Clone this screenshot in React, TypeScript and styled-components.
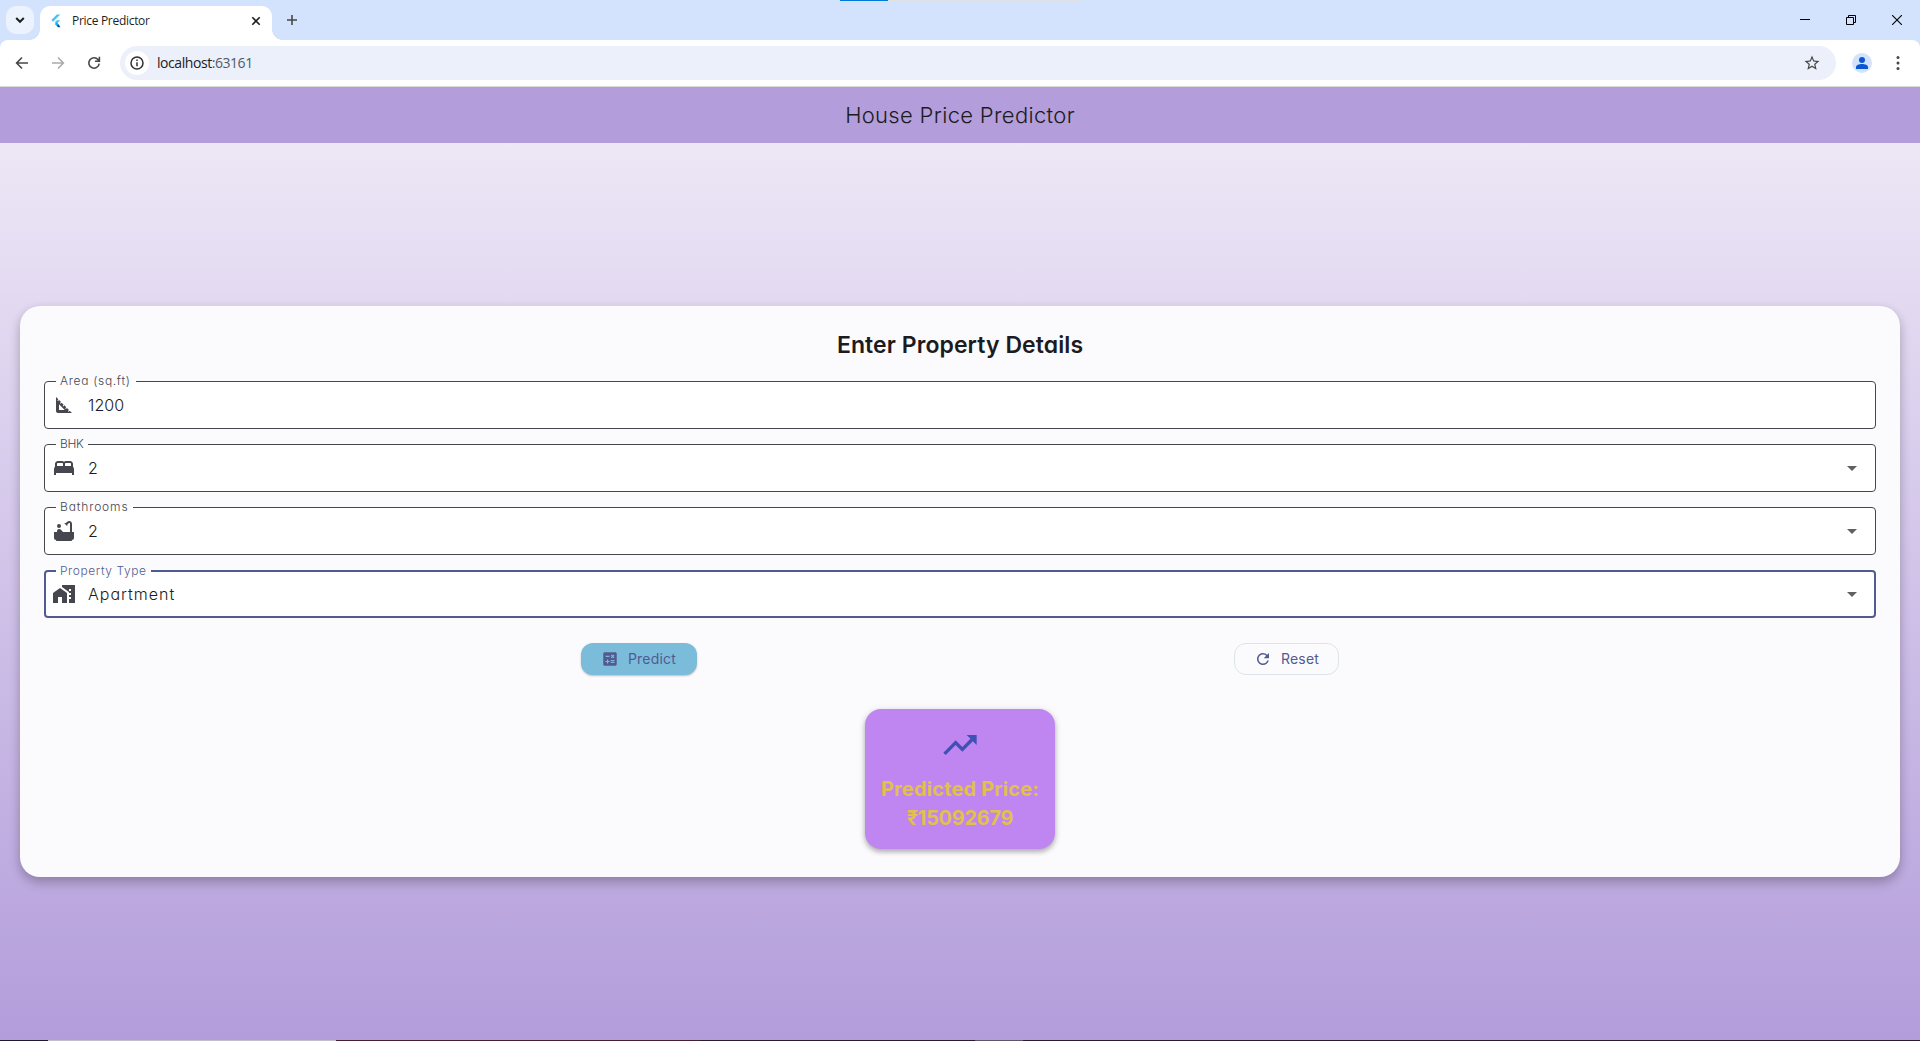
import React from 'react';
import styled, { createGlobalStyle } from 'styled-components';
import {
  MdArrowDropDown,
  MdBathtub,
  MdBed,
  MdCalculate,
  MdHomeWork,
  MdRefresh,
  MdSquareFoot,
  MdTrendingUp,
} from 'react-icons/md';

const GlobalStyle = createGlobalStyle`
  * { box-sizing: border-box; }
  body { margin: 0; overflow: hidden; }
  button { font: inherit; border: 0; padding: 0; background: none; color: inherit; }
  svg { display: block; flex: none; }
`;

const Window = styled.div`
  width: 1920px;
  height: 1041px;
  display: flex;
  flex-direction: column;
  font-family: Inter, 'Liberation Sans', sans-serif;
  font-feature-settings: 'cv11' 1;
  color: #1b1b21;
`;

/* ---------- browser chrome ---------- */

const TabStrip = styled.div`
  position: relative;
  height: 40px;
  flex: none;
  display: flex;
  align-items: flex-start;
  padding: 6px 0 0 6px;
  background: #d3e3fd;
`;

const LoadBar = styled.div`
  position: absolute;
  top: 0;
  left: 840px;
  width: 241px;
  height: 1px;
  background: linear-gradient(90deg, #0078d7 48px, #e1e2e4 48px);
`;

const TabSearch = styled.button`
  width: 28px;
  height: 28px;
  display: grid;
  place-items: center;
  border-radius: 10px;
  background: #ecf3fe;
`;

const Tab = styled.div`
  position: relative;
  width: 232px;
  height: 34px;
  margin-left: 6px;
  padding: 0 11px 5px 8px;
  display: flex;
  align-items: center;
  border-radius: 10px 10px 0 0;
  background: #fff;

  &::before,
  &::after {
    content: '';
    position: absolute;
    bottom: 0;
    width: 10px;
    height: 10px;
  }
  &::before {
    left: -10px;
    background: radial-gradient(circle at 0 0, transparent 9.5px, #fff 10px);
  }
  &::after {
    right: -10px;
    background: radial-gradient(circle at 100% 0, transparent 9.5px, #fff 10px);
  }
`;

const TabTitle = styled.span`
  flex: 1;
  margin: 1px 0 0 8px;
  font: 12px/16px 'Open Sans', 'Noto Sans', sans-serif;
  letter-spacing: -0.3px;
  color: #1f1f1f;
`;

const NewTab = styled.button`
  width: 28px;
  height: 28px;
  margin-left: 6px;
  display: grid;
  place-items: center;
`;

const WindowControls = styled.div`
  margin: -6px 0 0 auto;
  display: flex;
`;

const WindowButton = styled.button`
  width: 46px;
  height: 40px;
  display: grid;
  place-items: center;
`;

const Toolbar = styled.div`
  height: 47px;
  flex: none;
  background: #d3e3fd;
`;

const ToolbarInner = styled.div`
  height: 47px;
  padding: 6px 8px 6px 8px;
  display: flex;
  align-items: flex-start;
  border-radius: 8px 8px 0 0;
  border-bottom: 1px solid #d9dad8;
  background: #fff;
`;

const NavButton = styled.button<{ $gap?: number }>`
  width: 28px;
  height: 34px;
  margin-right: ${(p) => p.$gap ?? 8}px;
  display: grid;
  place-items: center;
`;

const Omnibox = styled.div`
  flex: 1;
  height: 34px;
  margin-right: 12px;
  padding: 0 15px 0 5px;
  display: flex;
  align-items: center;
  border-radius: 17px;
  background: #ecf0fa;
`;

const SiteInfo = styled.span`
  width: 24px;
  height: 24px;
  display: grid;
  place-items: center;
  border-radius: 50%;
  background: #fff;
`;

const Url = styled.span`
  flex: 1;
  margin-left: 8px;
  font: 14px/20px 'Open Sans', 'Noto Sans', sans-serif;
  letter-spacing: -0.44px;
  color: #202124;

  span { color: #4d5a6d; }
`;

const Profile = styled.span`
  width: 28px;
  height: 34px;
  margin-right: 8px;
  display: grid;
  place-items: center;
`;

/* ---------- application ---------- */

const AppBar = styled.header`
  height: 56px;
  flex: none;
  display: flex;
  align-items: center;
  justify-content: center;
  background: #b39ddb;
`;

const AppTitle = styled.h1`
  margin: 0;
  font-size: 22px;
  line-height: 28px;
  font-weight: 350;
  letter-spacing: 0.32px;
`;

const Body = styled.main`
  flex: 1;
  display: flex;
  flex-direction: column;
  justify-content: center;
  padding: 0 20px;
  background: linear-gradient(#ede7f6, #b39ddb);
`;

const FormCard = styled.section`
  height: 571px;
  padding: 24px;
  display: flex;
  flex-direction: column;
  border-radius: 20px;
  background: #fbfbfd;
  box-shadow: 0 6px 12px rgba(0, 0, 0, 0.2), 0 2px 10px rgba(0, 0, 0, 0.08);
`;

const CardTitle = styled.h2`
  margin: 0 0 21px;
  text-align: center;
  font-size: 23px;
  line-height: 30px;
  font-weight: 600;
  letter-spacing: 0.08px;
`;

const FieldList = styled.div`
  display: flex;
  flex-direction: column;
  gap: 15px;
`;

const Field = styled.div`
  position: relative;
  height: 48px;
  padding: 0 12px 0 8px;
  display: flex;
  align-items: center;
  color: #46464f;
`;

const Outline = styled.fieldset<{ $focused?: boolean }>`
  position: absolute;
  inset: -8px 0 0;
  margin: 0;
  padding: 0 0 0 ${(p) => (p.$focused ? 10 : 11)}px;
  min-width: 0;
  border: ${(p) => (p.$focused ? '2px solid #515b92' : '1px solid #46464f')};
  border-radius: 4px;
  background: #fff;
  color: ${(p) => (p.$focused ? '#515b92' : '#46464f')};

  legend {
    height: ${(p) => (p.$focused ? 18 : 17)}px;
    line-height: ${(p) => (p.$focused ? 18 : 16)}px;
  }
`;

const Legend = styled.legend<{ $width: number; $spacing: number }>`
  width: ${(p) => p.$width}px;
  padding: 0 0 0 4px;
  font-size: 12px;
  font-weight: 350;
  letter-spacing: ${(p) => p.$spacing}px;
  white-space: nowrap;
`;

const FieldIcon = styled.span`
  position: relative;
  width: 24px;
  height: 24px;
`;

const Value = styled.span<{ $spacing: number }>`
  position: relative;
  flex: 1;
  margin: 0 0 0 12px;
  font-size: 16px;
  line-height: 24px;
  font-weight: 350;
  letter-spacing: ${(p) => p.$spacing}px;
  color: #1b1b21;
`;

const Arrow = styled(MdArrowDropDown)`
  position: relative;
  color: #616161;
`;

const Actions = styled.div`
  margin-top: 25px;
  display: flex;
  justify-content: space-evenly;
`;

const ActionButton = styled.button<{ $filled?: boolean; $width: number }>`
  && {
    width: ${(p) => p.$width}px;
    height: 32px;
    padding-left: ${(p) => (p.$filled ? 20 : 19)}px;
    display: flex;
    align-items: center;
    gap: 9px;
    border-radius: 12px;
    border: ${(p) => (p.$filled ? '0' : '1px solid #dde4e9')};
    background: ${(p) => (p.$filled ? '#7cbcdb' : 'transparent')};
    box-shadow: ${(p) => (p.$filled ? '0 1px 2px rgba(0, 0, 0, 0.25)' : 'none')};
    font-size: 14px;
    line-height: 20px;
    letter-spacing: 0.18px;
    color: #515b92;
  }
`;

const ResultCard = styled.div`
  align-self: center;
  width: 190px;
  height: 140px;
  margin-top: 34px;
  padding-top: 16px;
  display: flex;
  flex-direction: column;
  align-items: center;
  border-radius: 16px;
  background: #bf85f0;
  box-shadow: 0 3px 5px rgba(0, 0, 0, 0.26), 0 1px 8px rgba(0, 0, 0, 0.1);
`;

const ResultText = styled.p`
  margin: 10px 0 0;
  display: flex;
  flex-direction: column;
  align-items: center;
  font-size: 20px;
  line-height: 29px;
  font-weight: 700;
  color: #e2c04c;
  white-space: nowrap;
`;

const ResultLine = styled.span<{ $spacing: number }>`
  letter-spacing: ${(p) => p.$spacing}px;
`;

const Taskbar = styled.div`
  height: 1px;
  flex: none;
  background: linear-gradient(
    90deg,
    #1c1b2d 48px,
    #c3bfc9 48px 336px,
    #46202c 336px 700px,
    #2b1b2c 700px 975px,
    #5f5768 975px 1023px,
    #2b1b2c 1023px
  );
`;

const FlutterLogo = () => (
  <svg width="16" height="16" viewBox="0 0 16 16">
    <path d="M8.8 1.6h3.5L5.1 8.8 3.3 7.1z" fill="#47c5fb" />
    <path d="M8.8 7.2h3.5L8.6 10.9 6.8 9.2z" fill="#47c5fb" />
    <path d="M6.8 11l1.8-1.8L10.4 11l-1.8 1.8z" fill="#00b5f8" />
    <path d="M8.6 12.8l1.8-1.8 2 3.2H10z" fill="#00569e" />
  </svg>
);

interface FieldProps {
  label: string;
  legendWidth: number;
  labelSpacing: number;
  value: string;
  valueSpacing: number;
  icon: React.ReactNode;
  select?: boolean;
  focused?: boolean;
}

const fields: FieldProps[] = [
  { label: 'Area (sq.ft)', legendWidth: 80, labelSpacing: 0.68, value: '1200', valueSpacing: 0.1, icon: <MdSquareFoot size={24} /> },
  { label: 'BHK', legendWidth: 32, labelSpacing: -0.3, value: '2', valueSpacing: 0, icon: <MdBed size={24} />, select: true },
  { label: 'Bathrooms', legendWidth: 77, labelSpacing: 0.87, value: '2', valueSpacing: 0, icon: <MdBathtub size={24} />, select: true },
  { label: 'Property Type', legendWidth: 95, labelSpacing: 0.58, value: 'Apartment', valueSpacing: 1, icon: <MdHomeWork size={24} />, select: true, focused: true },
];

const FormField = (p: FieldProps) => (
  <Field>
    <Outline $focused={p.focused}>
      <Legend $width={p.legendWidth} $spacing={p.labelSpacing}>{p.label}</Legend>
    </Outline>
    <FieldIcon>{p.icon}</FieldIcon>
    <Value $spacing={p.valueSpacing}>{p.value}</Value>
    {p.select && <Arrow size={24} />}
  </Field>
);

export default function App() {
  return (
    <Window>
      <GlobalStyle />
      <TabStrip>
        <LoadBar />
        <TabSearch aria-label="Search tabs">
          <svg width="10" height="10" viewBox="0 0 10 10" fill="none" stroke="#1f1f1f" strokeWidth="2">
            <path d="M1.2 3l3.8 3.8L8.8 3" />
          </svg>
        </TabSearch>
        <Tab>
          <FlutterLogo />
          <TabTitle>Price Predictor</TabTitle>
          <svg width="10" height="10" viewBox="0 0 10 10" stroke="#1f1f1f" strokeWidth="1.6">
            <path d="M1.3 1.3l7.4 7.4M8.7 1.3L1.3 8.7" />
          </svg>
        </Tab>
        <NewTab aria-label="New tab">
          <svg width="12" height="12" viewBox="0 0 12 12" stroke="#474747" strokeWidth="1.6">
            <path d="M6 1v10M1 6h10" />
          </svg>
        </NewTab>
        <WindowControls>
          <WindowButton aria-label="Minimize">
            <svg width="10" height="10" viewBox="0 0 10 10"><path d="M0 4h10v1H0z" /></svg>
          </WindowButton>
          <WindowButton aria-label="Restore">
            <svg width="10" height="10" viewBox="0 0 10 10" fill="none" stroke="#000">
              <path d="M.5 2.5h7v7h-7zM2.5 2.5v-2h7v7h-2" />
            </svg>
          </WindowButton>
          <WindowButton aria-label="Close">
            <svg width="10" height="10" viewBox="0 0 10 10" stroke="#000" strokeWidth="1.1">
              <path d="M0 0l10 10M10 0L0 10" />
            </svg>
          </WindowButton>
        </WindowControls>
      </TabStrip>
      <Toolbar>
        <ToolbarInner>
          <NavButton aria-label="Back">
            <svg width="16" height="16" viewBox="0 0 16 16" fill="none" stroke="#474747" strokeWidth="1.6">
              <path d="M14 8H3M8 2.5L2.6 8 8 13.5" />
            </svg>
          </NavButton>
          <NavButton aria-label="Forward">
            <svg width="16" height="16" viewBox="0 0 16 16" fill="none" stroke="#ababab" strokeWidth="1.6">
              <path d="M2 8h11M8 2.5L13.4 8 8 13.5" />
            </svg>
          </NavButton>
          <NavButton $gap={12} aria-label="Reload">
            <svg width="16" height="16" viewBox="0 0 16 16" fill="none" stroke="#474747" strokeWidth="1.6">
              <path d="M13.2 8.6A5.2 5.2 0 1 1 12 4.6L13.4 6M13.4 1.8v4.4H9" />
            </svg>
          </NavButton>
          <Omnibox>
            <SiteInfo>
              <svg width="14" height="14" viewBox="0 0 14 14" fill="none" stroke="#303030" strokeWidth="1.5">
                <circle cx="7" cy="7" r="6" />
                <path d="M7 6.2v4M7 3.6v1.5" />
              </svg>
            </SiteInfo>
            <Url>localhost<span>:63161</span></Url>
            <svg width="18" height="18" viewBox="0 0 24 24" fill="#474747">
              <path d="M22 9.24l-7.19-.62L12 2 9.19 8.63 2 9.24l5.46 4.73L5.82 21 12 17.27 18.18 21l-1.63-7.03L22 9.24zM12 15.4l-3.76 2.27 1-4.28-3.32-2.88 4.38-.38L12 6.1l1.71 4.04 4.38.38-3.32 2.88 1 4.28L12 15.4z" />
            </svg>
          </Omnibox>
          <Profile>
            <svg width="20" height="20" viewBox="0 0 20 20">
              <circle cx="10" cy="10" r="10" fill="#d3e3fd" />
              <circle cx="10" cy="7" r="3" fill="#0b57d0" />
              <path d="M4 16v-1.8C4 12.2 7 11 10 11s6 1.2 6 3.2V16z" fill="#0b57d0" />
            </svg>
          </Profile>
          <NavButton $gap={0} aria-label="Menu">
            <svg width="16" height="16" viewBox="0 0 16 16" fill="#474747">
              <circle cx="8" cy="2.6" r="1.5" />
              <circle cx="8" cy="8" r="1.5" />
              <circle cx="8" cy="13.4" r="1.5" />
            </svg>
          </NavButton>
        </ToolbarInner>
      </Toolbar>

      <AppBar>
        <AppTitle>House Price Predictor</AppTitle>
      </AppBar>
      <Body>
        <FormCard>
          <CardTitle>Enter Property Details</CardTitle>
          <FieldList>
            {fields.map((f) => (
              <FormField key={f.label} {...f} />
            ))}
          </FieldList>
          <Actions>
            <ActionButton $filled $width={116}>
              <MdCalculate size={18} />
              Predict
            </ActionButton>
            <ActionButton $width={105}>
              <MdRefresh size={18} />
              Reset
            </ActionButton>
          </Actions>
          <ResultCard>
            <MdTrendingUp size={40} color="#3f51b5" />
            <ResultText>
              <ResultLine $spacing={0.15}>Predicted Price:</ResultLine>
              <ResultLine $spacing={-0.3}>₹15092679</ResultLine>
            </ResultText>
          </ResultCard>
        </FormCard>
      </Body>
      <Taskbar />
    </Window>
  );
}
